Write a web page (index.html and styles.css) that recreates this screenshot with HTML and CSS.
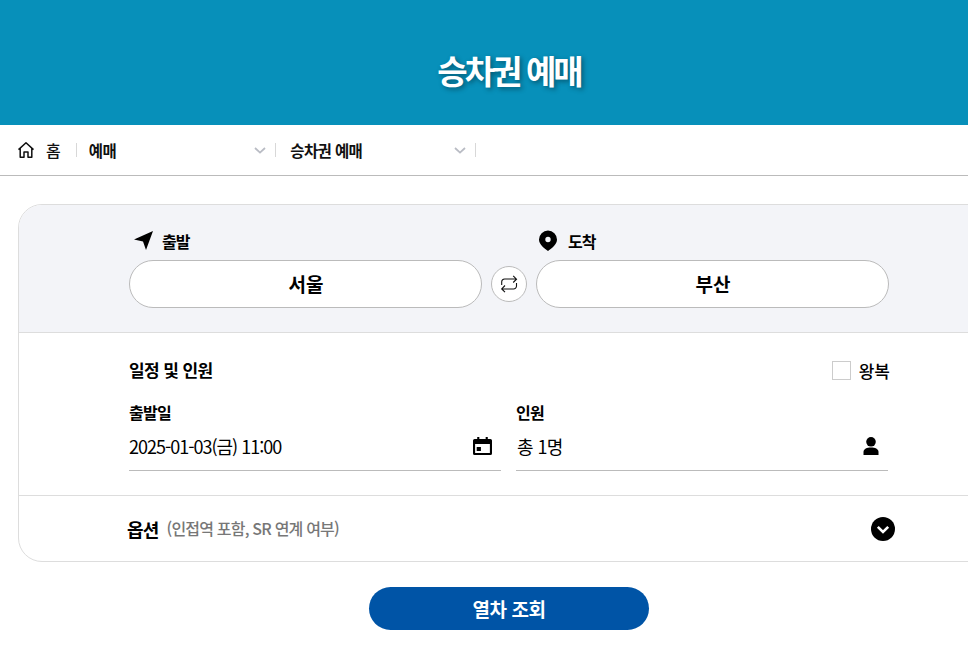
FILE: index.html
```html
<!DOCTYPE html>
<html lang="ko">
<head>
<meta charset="utf-8">
<title>승차권 예매</title>
<link rel="stylesheet" href="styles.css">
</head>
<body>
<div class="page">
  <header class="hero"><h1>승차권 예매</h1></header>
  <nav class="crumbs">
    <svg class="home" width="18" height="18" viewBox="0 0 18 18" fill="none" stroke="#111" stroke-width="1.5" stroke-linejoin="round"><path d="M1.500 8.600 9 1.800l7.500 6.800M3.200 7.200v9h3.800v-5.200h4v5.200h3.800v-9"/></svg>
    <span class="crumb-home">홈</span>
    <span class="sep"></span>
    <div class="crumb-select"><span>예매</span><svg width="12" height="7" viewBox="0 0 12 7" fill="none" stroke="#b9bcc4" stroke-width="1.8"><path d="M1 1l5 4.600L11 1"/></svg></div>
    <span class="sep"></span>
    <div class="crumb-select"><span>승차권 예매</span><svg width="12" height="7" viewBox="0 0 12 7" fill="none" stroke="#b9bcc4" stroke-width="1.8"><path d="M1 1l5 4.600L11 1"/></svg></div>
    <span class="sep"></span>
  </nav>
  <main class="card">
    <section class="route">
      <div class="inner route-grid">
        <div class="station">
          <div class="st-label dep"><svg width="20" height="20" viewBox="0 0 20 20"><path d="M19 0 0 8.500l9 2L12 19z" fill="#000"/></svg><span>출발</span></div>
          <button class="st-btn">서울</button>
        </div>
        <button class="swap" aria-label="출발 도착 바꾸기"><svg width="18" height="18" viewBox="0 0 18 18" fill="none" stroke="#111" stroke-width="1.1"><path d="M1.700 10V7a3 3 0 0 1 3-3h11.800M13.200.8l3.300 3.400-3.300 3.300M16.500 8v3a3 3 0 0 1-3 3H1.700M5 10.500l-3.300 3.400L5 17.200"/></svg></button>
        <div class="station">
          <div class="st-label arr"><svg width="20" height="22" viewBox="0 0 20 22"><path fill-rule="evenodd" d="M10 .5a9 9 0 0 1 9 9c0 4.500-4.500 8.500-9 11.500C5.500 18 1 14 1 9.500a9 9 0 0 1 9-9zm0 6.300a2.700 2.700 0 1 0 0 5.400 2.700 2.700 0 0 0 0-5.400z" fill="#000"/></svg><span>도착</span></div>
          <button class="st-btn">부산</button>
        </div>
      </div>
    </section>
    <section class="schedule">
      <div class="inner">
        <div class="sch-head">
          <h2>일정 및 인원</h2>
          <label class="round"><span class="box"></span><span>왕복</span></label>
        </div>
        <div class="fields">
          <div class="field">
            <div class="f-label">출발일</div>
            <div class="f-value date"><span>2025-01-03(금) 11:00</span><svg width="19" height="18" viewBox="0 0 18 18" preserveAspectRatio="none"><path fill-rule="evenodd" d="M4 0h2v2h6V0h2v2h2.500A1.500 1.500 0 0 1 18 3.500v13a1.500 1.500 0 0 1-1.500 1.500h-15A1.500 1.500 0 0 1 0 16.500v-13A1.500 1.500 0 0 1 1.500 2H4zM2 7v9h14V7zm1.500 3h4v4h-4z" fill="#000"/></svg></div>
          </div>
          <div class="field">
            <div class="f-label">인원</div>
            <div class="f-value people"><span>총 1명</span><svg class="person" width="16" height="18" viewBox="0 0 16 18"><circle cx="8" cy="4.800" r="4.800" fill="#000"/><path d="M.5 18v-3c0-3 3.500-4.400 7.500-4.400s7.500 1.400 7.500 4.400v3z" fill="#000"/></svg></div>
          </div>
        </div>
      </div>
    </section>
    <section class="options">
      <div class="inner opt-row">
        <div class="opt-text"><strong>옵션</strong><span>(인접역 포함, SR 연계 여부)</span></div>
        <svg class="opt-icon" width="24" height="24" viewBox="0 0 24 24"><circle cx="12" cy="12" r="12" fill="#000"/><path d="M6.800 9.800 12 15l5.200-5.200" fill="none" stroke="#fff" stroke-width="2.600"/></svg>
      </div>
    </section>
  </main>
  <div class="actions"><button class="search">열차 조회</button></div>
</div>
</body>
</html>
```
FILE: styles.css
```css
* { box-sizing: border-box; }
html, body { margin: 0; padding: 0; overflow: hidden; height: 100%; background: #fff; }
body { font-family: "Noto Sans CJK KR", "Noto Sans", sans-serif; color: #000; }
button { font-family: inherit; padding: 0; cursor: pointer; }
.page { width: 1018px; }

.hero { height: 125px; background: #0790ba; display: flex; align-items: center; justify-content: center; padding-top: 14px; }
.hero h1 { margin: 0; font-size: 33px; font-weight: 700; letter-spacing: -2.900px; color: #fff; line-height: 50px; text-shadow: 2px 2px 5px rgba(0,0,0,.4); }

.crumbs { height: 51px; border-bottom: 1px solid #bbb; display: flex; align-items: center; padding: 0 0 0 17px; font-size: 16px; color: #111; }
.home { flex: none; margin-right: 11px; }
.crumb-home { margin-right: 15px; font-weight: 500; line-height: 20px; }
.sep { width: 1px; height: 14px; background: #d8d8d8; flex: none; }
.crumb-select { width: 198.500px; padding: 0 9px 0 12px; display: flex; align-items: center; justify-content: space-between; font-size: 15.500px; font-weight: 700; letter-spacing: -.6px; line-height: 20px; }
.crumb-select + .sep + .crumb-select { padding-left: 14px; }

.card { margin: 28px 18px 0; border: 1px solid #ddd; border-radius: 24px; overflow: hidden; background: #fff; }
.inner { width: 760px; margin: 0 auto; }

.route { background: #f3f4f8; height: 128px; border-bottom: 1px solid #ddd; padding-top: 21px; }
.route-grid { display: flex; align-items: flex-end; justify-content: space-between; }
.station { width: 353px; }
.st-label { height: 34px; padding-bottom: 4px; display: flex; align-items: center; font-size: 16px; font-weight: 700; letter-spacing: -1px; line-height: 20px; }
.st-label.dep { gap: 8px; padding-left: 5px; }
.st-label.arr { gap: 10px; padding-left: 2px; }
.st-btn { display: block; width: 100%; height: 48px; padding: 0 0 1px 1px; border: 1px solid #bbb; border-radius: 24px; background: #fff; font-size: 19px; font-weight: 700; color: #000; }
.swap { width: 36px; height: 36px; margin-bottom: 6px; border: 1px solid #bbb; border-radius: 50%; background: #fff; display: flex; align-items: center; justify-content: center; }

.schedule { height: 163px; border-bottom: 1px solid #ddd; padding-top: 21px; }
.sch-head { display: flex; justify-content: space-between; align-items: center; height: 30px; }
.sch-head h2 { margin: 0; font-size: 17px; font-weight: 700; letter-spacing: -.6px; }
.round { display: flex; align-items: center; gap: 8px; font-size: 17px; font-weight: 500; line-height: 22px; margin-top: 3px; margin-right: -1px; }
.box { width: 19px; height: 19px; border: 1px solid #ccc; background: #fff; }
.fields { display: flex; gap: 15px; margin-top: 17px; }
.field { width: 372px; }
.f-label { font-size: 16px; font-weight: 700; line-height: 22px; letter-spacing: -.7px; }
.f-value { height: 48px; padding: 0 3px 2px 0; border-bottom: 1px solid #bbb; display: flex; align-items: center; justify-content: space-between; font-size: 18px; line-height: 24px; }
.f-value span { letter-spacing: -.6px; }
.f-value.date { padding-right: 9px; }
.f-value.date span { letter-spacing: -1px; }
.f-value.people { padding-left: 1px; }
.f-value .person { margin-right: 6px; }

.options { height: 65px; display: flex; align-items: center; }
.opt-row { display: flex; align-items: center; justify-content: space-between; }
.opt-text { display: flex; align-items: center; gap: 8px; margin-left: -2px; }
.opt-text strong { font-size: 18px; font-weight: 700; letter-spacing: -.8px; line-height: 24px; }
.opt-text span { font-size: 16px; font-weight: 500; color: #777; letter-spacing: -.8px; line-height: 24px; margin-top: -1px; }
.opt-icon { margin-right: -6px; }

.actions { margin-top: 25px; display: flex; justify-content: center; }
.search { width: 280px; height: 43px; border: 0; border-radius: 22px; background: #0054a6; color: #fff; font-size: 19px; font-weight: 700; letter-spacing: -.4px; }
```
